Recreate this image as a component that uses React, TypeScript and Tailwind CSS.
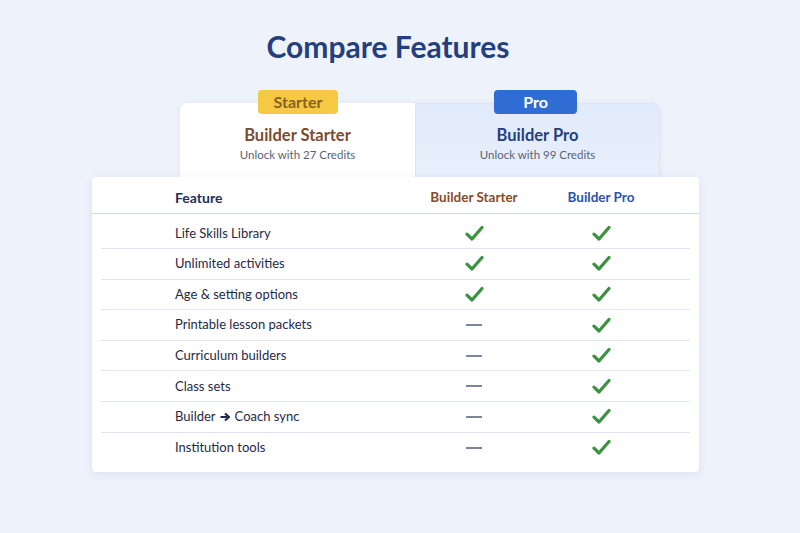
import React from 'react';

const rows: { name: React.ReactNode; starter: boolean }[] = [
    { name: 'Life Skills Library', starter: true },
    { name: 'Unlimited activities', starter: true },
    { name: 'Age & setting options', starter: true },
    { name: 'Printable lesson packets', starter: false },
    { name: 'Curriculum builders', starter: false },
    { name: 'Class sets', starter: false },
    {
        name: (
            <span className="flex items-center gap-[4px]">
                Builder
                <svg width="11" height="10" viewBox="0 0 11 10" className="mt-[1px]">
                    <path d="M0.5 5h6.5M5 1.5L9 5L5 8.5" fill="none" stroke="#1f2a48" strokeWidth="2.2" strokeLinejoin="round" />
                </svg>
                Coach sync
            </span>
        ),
        starter: false,
    },
    { name: 'Institution tools', starter: false },
];

const Check = () => (
    <svg width="19" height="17" viewBox="0 0 19 17">
        <path d="M2 9.2L7 14L17 2.5" fill="none" stroke="#3b923f" strokeWidth="3.2" strokeLinecap="round" strokeLinejoin="round" />
    </svg>
);

const Dash = () => (
    <svg width="16" height="4" viewBox="0 0 16 4">
        <path d="M0 2h16" stroke="#5d6780" strokeWidth="1.6" />
    </svg>
);

export default function App() {
    return (
        <div className="min-h-[533px] w-full bg-[#eef2fb] font-['Lato','Open_Sans',sans-serif] pt-[28px]">
            <h1 className="text-center text-[30px] leading-[36px] font-bold text-[#243f7e] pr-[24px]">Compare Features</h1>

            {/* Plan cards */}
            <div className="relative mt-[39px] ml-[180px] w-[480px] h-[74px] flex rounded-t-[8px] shadow-[0_1px_6px_rgba(40,70,140,0.08)]">
                <div className="relative w-[235px] bg-white rounded-tl-[8px] flex flex-col items-center pt-[22px]">
                    <div className="absolute -top-[13px] left-[78px] w-[80px] h-[24px] rounded-[4px] bg-[#f6c945] flex items-center justify-center text-[16px] font-bold text-[#87621f]">
                        Starter
                    </div>
                    <div className="text-[16.5px] leading-[20px] font-bold text-[#7b4b30]">Builder Starter</div>
                    <div className="mt-[2px] text-[11.5px] leading-[16px] text-[#5a6275]">Unlock with 27 Credits</div>
                </div>
                <div className="relative flex-1 bg-gradient-to-b from-[#e2ebfb] to-[#e8effc] rounded-tr-[8px] border border-b-0 border-[#d9e4f6] flex flex-col items-center pt-[21px]">
                    <div className="absolute -top-[14px] left-[78px] w-[83px] h-[24px] rounded-[4px] bg-[#2f6cd4] flex items-center justify-center text-[16px] font-bold text-white">
                        Pro
                    </div>
                    <div className="text-[16.5px] leading-[20px] font-bold text-[#243f7e]">Builder Pro</div>
                    <div className="mt-[2px] text-[11.5px] leading-[16px] text-[#5a6275]">Unlock with 99 Credits</div>
                </div>
            </div>

            {/* Table */}
            <div className="relative ml-[92px] w-[607px] bg-white rounded-[4px] shadow-[0_2px_10px_rgba(40,70,140,0.10)] pb-[8.5px]">
                <div className="h-[37px] pt-[5px] px-[9px] grid grid-cols-[309px_128px_126px_1fr] items-center border-b-[1.5px] border-[#cfd9ec]">
                    <div className="pl-[74px] text-[14px] font-bold text-[#1e2e5a]">Feature</div>
                    <div className="text-center text-[13.5px] font-bold text-[#8a4a2a]">Builder Starter</div>
                    <div className="text-center text-[13.5px] font-bold text-[#2a52ad]">Builder Pro</div>
                    <div />
                </div>
                <div className="px-[9px] pt-[4.5px]">
                    {rows.map((r, i) => (
                        <div
                            key={i}
                            className={`h-[30.6px] grid grid-cols-[309px_128px_126px_1fr] items-center ${i < rows.length - 1 ? 'border-b-[1.5px] border-[#dfe6f2]' : ''}`}
                        >
                            <div className="pl-[74px] text-[13px] text-[#1f2a48]">{r.name}</div>
                            <div className="flex justify-center">{r.starter ? <Check /> : <Dash />}</div>
                            <div className="flex justify-center"><Check /></div>
                            <div />
                        </div>
                    ))}
                </div>
            </div>
        </div>
    );
}
